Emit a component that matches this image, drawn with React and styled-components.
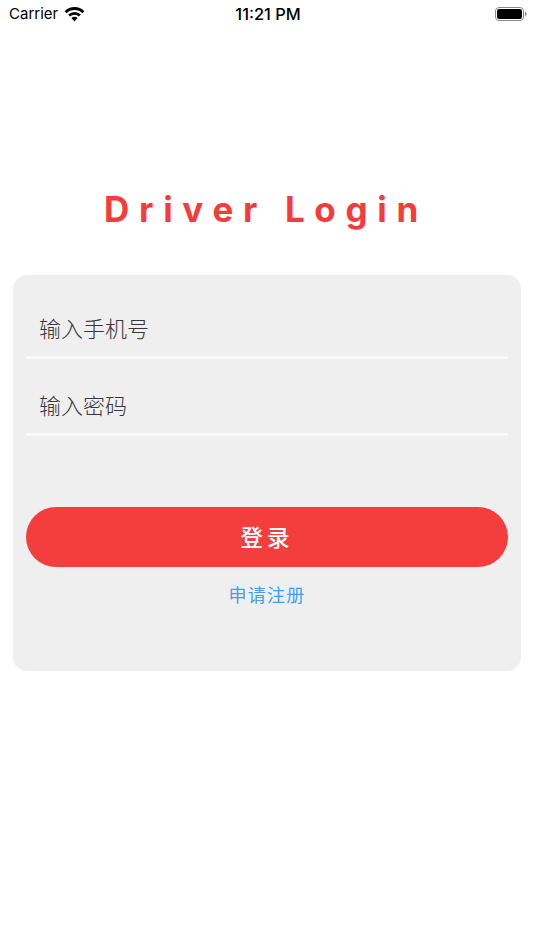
import React from "react";
import styled, { createGlobalStyle } from "styled-components";

const GlobalStyle = createGlobalStyle`
  html, body {
    margin: 0;
    padding: 0;
    background: #ffffff;
  }
  * {
    box-sizing: border-box;
  }
`;

const Page = styled.div`
  width: 534px;
  height: 950px;
  overflow: hidden;
  background: #ffffff;
  font-family: Inter, "Noto Sans CJK SC", sans-serif;
  display: flex;
  flex-direction: column;
`;

const StatusBar = styled.div`
  height: 28px;
  padding: 0 7px 0 9px;
  display: grid;
  grid-template-columns: 1fr auto 1fr;
  align-items: center;
  color: #000000;
`;

const Left = styled.div`
  display: flex;
  align-items: center;
  gap: 6px;
`;

const Carrier = styled.span`
  font-size: 15px;
  font-weight: 400;
  line-height: 26px;
`;

const Clock = styled.span`
  font-size: 16.4px;
  font-weight: 500;
  line-height: 26px;
`;

const Right = styled.div`
  display: flex;
  justify-content: flex-end;
`;

const Title = styled.h1`
  margin: 145px 0 0;
  height: 72px;
  padding-right: 2px;
  font-size: 35px;
  line-height: 72px;
  font-weight: 700;
  letter-spacing: 9.7px;
  text-align: center;
  color: #f43c3c;
  white-space: nowrap;
`;

const Card = styled.div`
  margin: 30px 13px 0;
  height: 396px;
  padding: 13px 13px 0;
  border-radius: 14px;
  background: #efefef;
  display: flex;
  flex-direction: column;
`;

const Field = styled.div`
  height: 71px;
  margin-top: ${props => props.$top || 0}px;
  padding: 9px 13px 0;
  display: flex;
  align-items: center;
  border-bottom: 3px solid #f9f9f9;
  color: #383838;
  font-size: 22px;
  font-weight: 300;
`;

const LoginButton = styled.div`
  height: 60px;
  margin-top: 71px;
  padding-bottom: 3px;
  border-radius: 30px;
  background: #f43e3e;
  color: #ffffff;
  font-size: 22.5px;
  font-weight: 500;
  letter-spacing: 4px;
  display: flex;
  align-items: center;
  justify-content: center;
`;

const Register = styled.div`
  margin-top: 16px;
  text-align: center;
  color: #3f9ff5;
  font-size: 18px;
  font-weight: 400;
  line-height: 26px;
  letter-spacing: 1.2px;
`;

const Wifi = () => (
  <svg width="21" height="15" viewBox="0 0 21 15">
    <path d="M1.660 5.160A12.500 12.500 0 0 1 19.340 5.160" fill="none" stroke="#000" strokeWidth="2.800" />
    <path d="M5.060 8.560A7.700 7.700 0 0 1 15.940 8.560" fill="none" stroke="#000" strokeWidth="2.800" />
    <path d="M10.500 14.500L7.400 11.100A4.400 4.400 0 0 1 13.600 11.100Z" fill="#000" />
  </svg>
);

const Battery = () => (
  <svg width="32" height="14" viewBox="0 0 32 14">
    <rect x="0.500" y="0.500" width="28" height="13" rx="3.500" fill="none" stroke="#8a8a8a" />
    <rect x="2" y="2" width="25" height="10" rx="2.200" fill="#000" />
    <path d="M30 4.800c1 .3 1.600 1.200 1.600 2.200s-.6 1.900-1.600 2.200z" fill="#8a8a8a" />
  </svg>
);

const App = () => {
  return (
    <Page>
      <GlobalStyle />
      <StatusBar>
        <Left>
          <Carrier>Carrier</Carrier>
          <Wifi />
        </Left>
        <Clock>11:21 PM</Clock>
        <Right>
          <Battery />
        </Right>
      </StatusBar>
      <Title>Driver Login</Title>
      <Card>
        <Field>输入手机号</Field>
        <Field $top={6}>输入密码</Field>
        <LoginButton>登录</LoginButton>
        <Register>申请注册</Register>
      </Card>
    </Page>
  );
};

export default App;
